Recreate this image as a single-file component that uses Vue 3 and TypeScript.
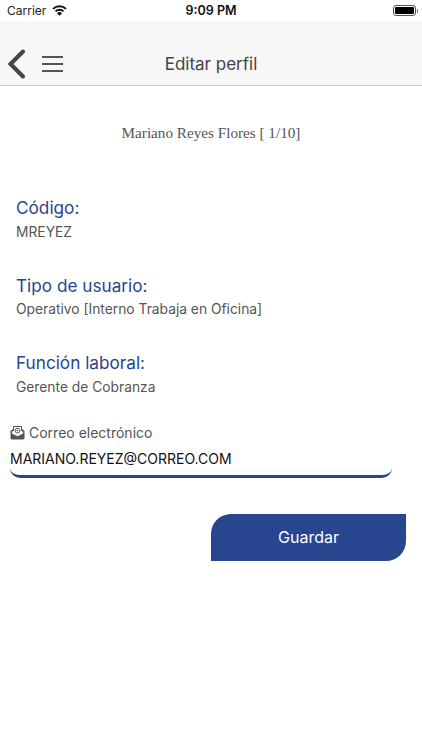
<script setup lang="ts">
const fields = [
  { label: 'Código:', value: 'MREYEZ' },
  { label: 'Tipo de usuario:', value: 'Operativo [Interno Trabaja en Oficina]' },
  { label: 'Función laboral:', value: 'Gerente de Cobranza' },
]
</script>

<template>
  <div class="page">
    <div class="status">
      <div class="status-left">
        <span>Carrier</span>
        <svg width="15" height="11" viewBox="0 0 15 11">
          <path d="M1 3.9 A9.4 9.4 0 0 1 14 3.9" fill="none" stroke="#111" stroke-width="1.9" />
          <path d="M3.5 6.4 A5.8 5.8 0 0 1 11.5 6.4" fill="none" stroke="#111" stroke-width="1.9" />
          <path d="M7.5 10.8 L5 8.2 A3.5 3.5 0 0 1 10 8.2 Z" fill="#111" />
        </svg>
      </div>
      <div class="status-time">9:09 PM</div>
      <div class="status-right">
        <div class="battery"><div class="battery-fill"></div></div>
        <div class="battery-tip"></div>
      </div>
    </div>

    <header class="nav">
      <svg class="back" width="20" height="30" viewBox="0 0 20 30">
        <path d="M17 2.5 L4.5 15 L17 27.5" fill="none" stroke="#444" stroke-width="4" stroke-linecap="round" stroke-linejoin="miter" />
      </svg>
      <div class="burger"><i></i><i></i><i></i></div>
      <div class="nav-title">Editar perfil</div>
    </header>

    <main class="content">
      <h1 class="name">Mariano Reyes Flores [ 1/10]</h1>

      <section class="fields">
        <div v-for="f in fields" :key="f.label" class="field">
          <div class="field-label">{{ f.label }}</div>
          <div class="field-value">{{ f.value }}</div>
        </div>
      </section>

      <div class="email">
        <div class="email-label">
          <svg width="15" height="15" viewBox="0 0 15 15">
            <path d="M0.5 6 L3 4 L3 1 L12 1 L12 4 L14.5 6 L14.5 13 Q14.5 14.5 13 14.5 L2 14.5 Q0.5 14.5 0.5 13 Z" fill="#555" />
            <path d="M2 7 L4 5.4 L4 2 L11 2 L11 5.4 L13 7 L13 8.6 L7.5 11.2 L2 8.6 Z" fill="#fff" />
            <circle cx="7.5" cy="5.6" r="2.4" fill="none" stroke="#555" stroke-width="1" />
            <circle cx="7.5" cy="5.6" r="0.8" fill="#555" />
          </svg>
          <span>Correo electrónico</span>
        </div>
        <div class="email-value">MARIANO.REYEZ@CORREO.COM</div>
      </div>

      <div class="actions">
        <button class="save" type="button">Guardar</button>
      </div>
    </main>
  </div>
</template>

<style>
html, body { margin: 0; background: #fff; }
</style>

<style scoped>
.page {
  width: 422px;
  height: 750px;
  overflow: hidden;
  background: #fff;
  font-family: Inter, "Liberation Sans", sans-serif;
  display: flex;
  flex-direction: column;
}
.status {
  height: 21px;
  padding: 0 4px 0 7px;
  display: flex;
  align-items: center;
  justify-content: space-between;
  position: relative;
  font-size: 12px;
  color: #222;
  background: #fff;
}
.status-left { display: flex; align-items: center; gap: 6px; }
.status-time {
  position: absolute;
  left: 0;
  right: 0;
  text-align: center;
  font-weight: 600;
  font-size: 12.5px;
  color: #111;
}
.status-right { display: flex; align-items: center; gap: 1px; }
.battery {
  width: 23px;
  height: 11px;
  border: 1px solid #555;
  border-radius: 3px;
  padding: 1px;
  box-sizing: border-box;
}
.battery-fill { width: 100%; height: 100%; background: #000; border-radius: 1px; }
.battery-tip { width: 1px; height: 4px; background: #888; }
.nav {
  height: 65px;
  box-sizing: border-box;
  background: #f7f7f7;
  border-bottom: 1px solid #c8c8c8;
  display: flex;
  align-items: center;
  padding: 21px 0 0 6px;
  position: relative;
}
.back { flex: none; }
.burger {
  margin-left: 16px;
  width: 21px;
  display: flex;
  flex-direction: column;
  gap: 5px;
}
.burger i { display: block; height: 2px; background: #555; }
.nav-title {
  position: absolute;
  left: 0;
  right: 0;
  top: 32px;
  text-align: center;
  font-size: 17px;
  line-height: 22px;
  color: #444;
}
.content { display: flex; flex-direction: column; }
.name {
  margin: 37px 0 0;
  text-align: center;
  font-family: "Liberation Serif", serif;
  font-weight: 400;
  font-size: 15.2px;
  line-height: 20px;
  color: #555;
}
.fields {
  margin-top: 53px;
  padding-left: 16px;
  display: flex;
  flex-direction: column;
  gap: 32px;
}
.field-label { font-size: 17.2px; line-height: 24px; color: #27468f; }
.field-value { margin-top: 1.5px; font-size: 13.8px; line-height: 20px; color: #555; }
.email { margin: 26px 30px 0 10px; }
.email-label {
  display: flex;
  align-items: center;
  gap: 4px;
  font-size: 14px;
  line-height: 20px;
  color: #555;
}
.email-value {
  height: 35px;
  box-sizing: border-box;
  padding-top: 6px;
  font-size: 14px;
  line-height: 20px;
  color: #111;
  border-bottom: 3px solid #27468f;
  border-radius: 0 0 10px 10px;
}
.actions { display: flex; justify-content: flex-end; padding-right: 16px; margin-top: 36px; }
.save {
  width: 195px;
  height: 47px;
  border: 0;
  background: #27468f;
  color: #fff;
  font-family: inherit;
  font-size: 16px;
  border-radius: 20px 0 20px 0;
}
</style>
